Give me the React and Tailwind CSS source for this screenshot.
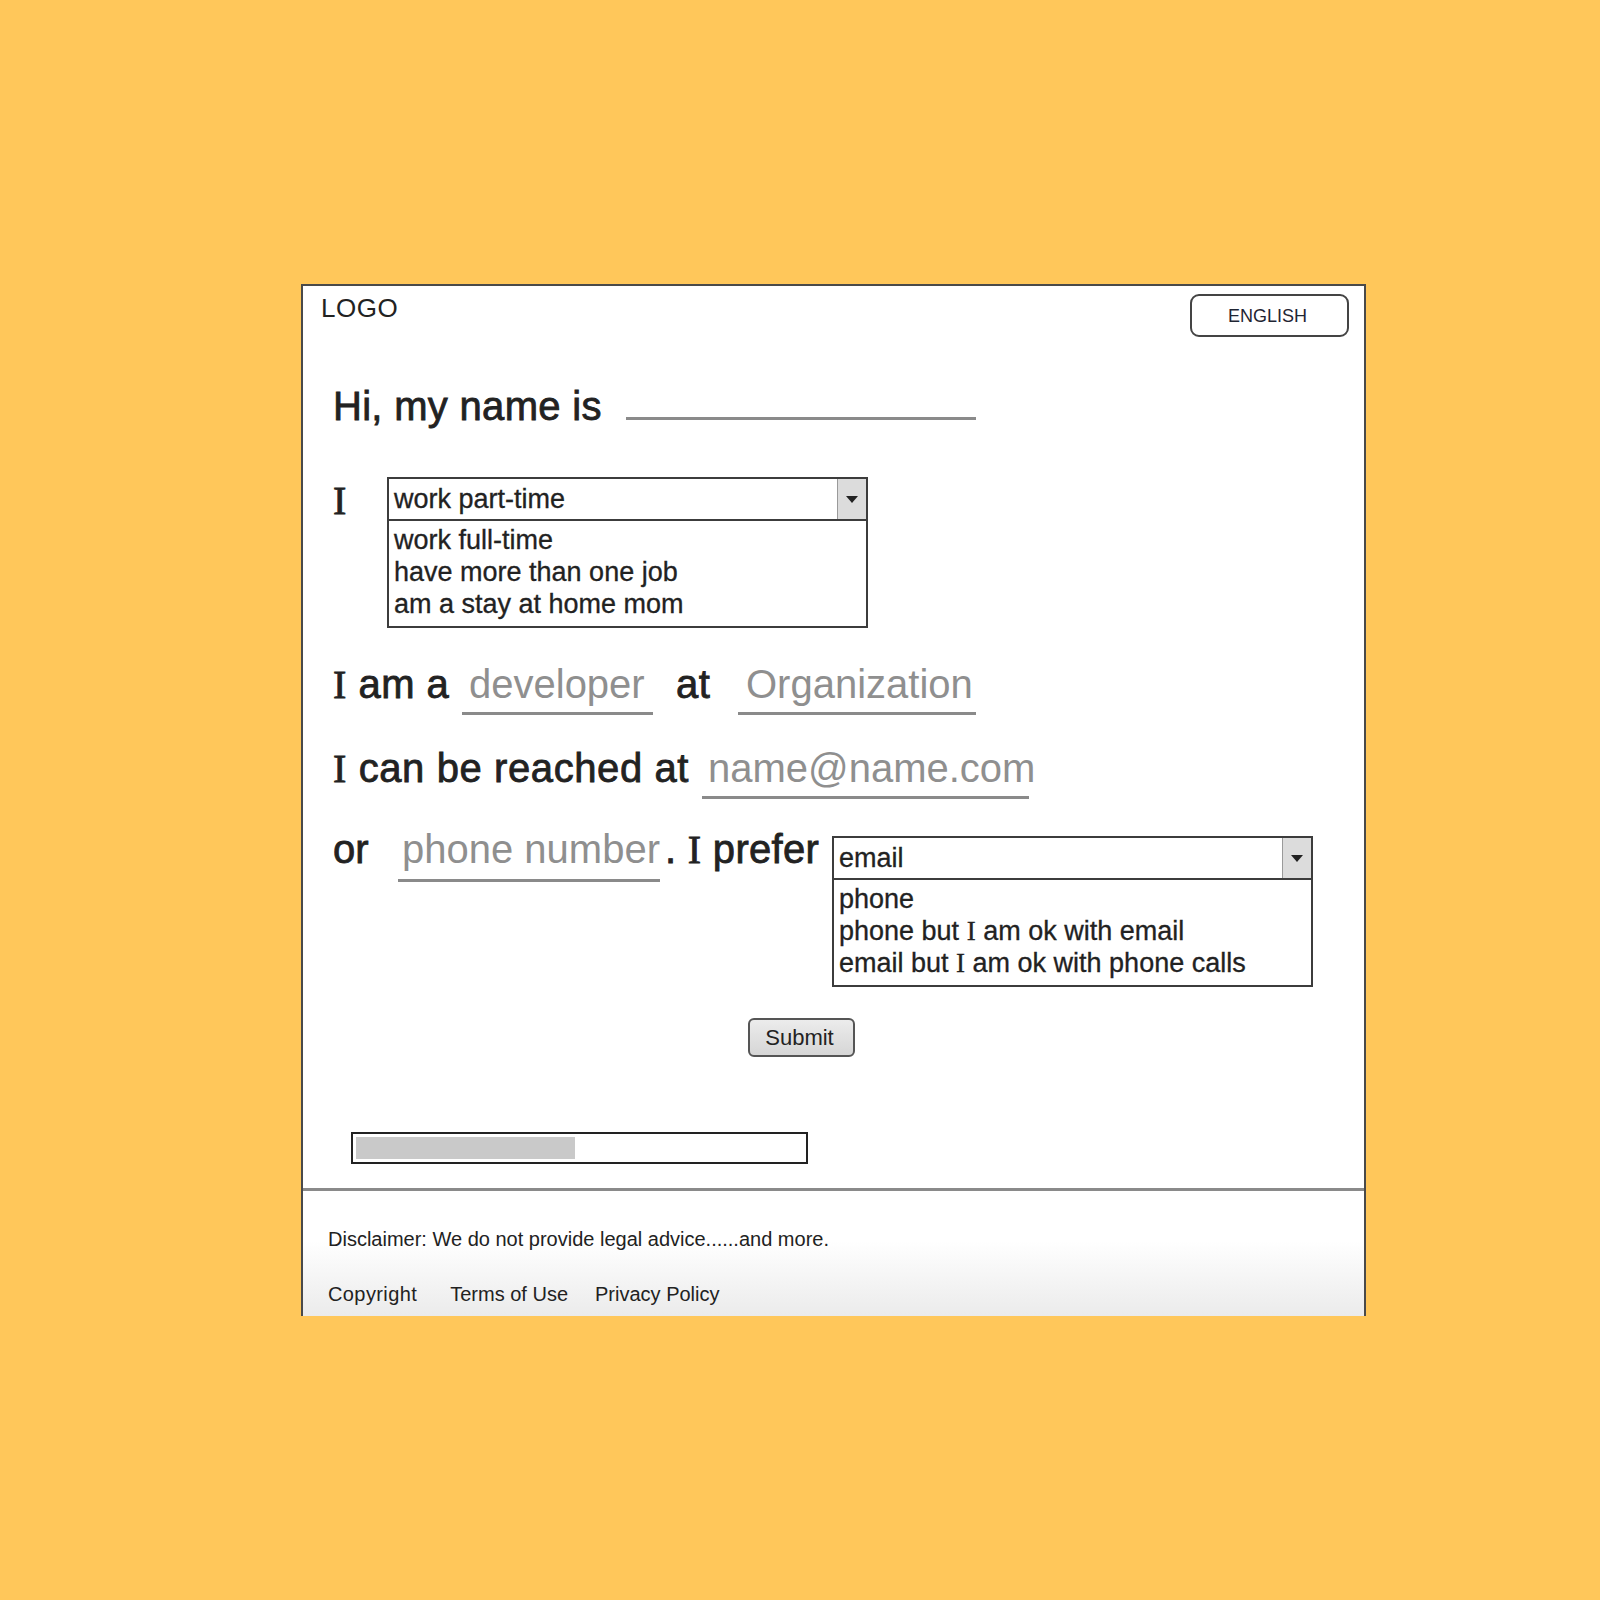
import React from "react";

// serif "I" like the wireframe font
const I = () => <span className="font-['Liberation_Serif',serif]">I</span>;

const Select = ({ value, options }) => (
    <div className="w-[481px] border-2 border-[#3c3c3c] bg-white text-[27px] text-[#222] tracking-normal [-webkit-text-stroke:0.3px_#222]">
        <div className="flex h-[42px] border-b-2 border-[#3c3c3c]">
            <div className="flex-1 pl-[5px] leading-[40px]">{value}</div>
            <div className="w-[29px] flex items-center justify-center bg-[#dcdcdc] border-l border-[#9a9a9a]">
                <svg width="12" height="7" viewBox="0 0 12 7">
                    <path d="M0 0h12L6 7z" fill="#222" />
                </svg>
            </div>
        </div>
        <div className="pt-[3px] pb-[6px] pl-[5px] leading-[32px]">
            {options.map((o, i) => (
                <div key={i}>{o}</div>
            ))}
        </div>
    </div>
);

export default function App() {
    return (
        <div className="min-h-[1600px] w-full bg-[#ffc75a] pt-[284px] pl-[301px] font-['Liberation_Sans',Arial,sans-serif] text-[#222]">
            <div className="w-[1065px] h-[1032px] border-2 border-b-0 border-[#4a4a4a] bg-white flex flex-col">
                {/* header */}
                <div className="flex items-start justify-between pl-[18px] pr-[15px] pt-[8px]">
                    <span className="text-[26px] leading-none mt-[1px] tracking-[0.5px]">LOGO</span>
                    <button className="w-[159px] h-[43px] rounded-[9px] border-2 border-[#444] pr-[4px] text-[18px] leading-none text-[#1f2533]">
                        ENGLISH
                    </button>
                </div>

                {/* form */}
                <div className="flex-1 pl-[30px] text-[40px] leading-none">
                    <div className="flex items-start mt-[49px] tracking-[0.3px] [-webkit-text-stroke:0.8px_#222]">
                        <span>Hi, my name is</span>
                        <div className="ml-[24px] mt-[31px] h-[3px] w-[350px] bg-[#8a8a8a]" />
                    </div>

                    <div className="flex items-start mt-[51px]">
                        <span className="mt-[3px] w-[54px] [-webkit-text-stroke:0.8px_#222]">
                            <I />
                        </span>
                        <Select
                            value="work part-time"
                            options={["work full-time", "have more than one job", "am a stay at home mom"]}
                        />
                    </div>

                    <div className="flex items-start mt-[36px]">
                        <span className="w-[129px] tracking-[0.5px] [-webkit-text-stroke:0.8px_#222]">
                            <I /> am a
                        </span>
                        <div className="w-[191px] h-[51px] border-b-[3px] border-[#8a8a8a] pl-[7px] text-[#8f8f8f]">
                            developer
                        </div>
                        <span className="ml-[23px] w-[62px] tracking-[0.5px] [-webkit-text-stroke:0.8px_#222]">at</span>
                        <div className="w-[238px] h-[51px] border-b-[3px] border-[#8a8a8a] pl-[8px] text-[#8f8f8f]">
                            Organization
                        </div>
                    </div>

                    <div className="flex items-start mt-[33px]">
                        <span className="w-[369px] tracking-[0.6px] [-webkit-text-stroke:0.8px_#222]">
                            <I /> can be reached at
                        </span>
                        <div className="w-[327px] h-[51px] border-b-[3px] border-[#8a8a8a] pl-[6px] text-[#8f8f8f]">
                            name@name.com
                        </div>
                    </div>

                    <div className="flex items-start mt-[30px]">
                        <span className="w-[65px] [-webkit-text-stroke:0.8px_#222]">or</span>
                        <div className="w-[262px] h-[53px] border-b-[3px] border-[#8a8a8a] pl-[4px] text-[#8f8f8f]">
                            phone number
                        </div>
                        <span className="w-[172px] pl-[5px] tracking-[0.3px] [-webkit-text-stroke:0.8px_#222]">
                            . <I /> prefer
                        </span>
                        <div className="mt-[7px]">
                            <Select
                                value="email"
                                options={[
                                    "phone",
                                    <>phone but <I /> am ok with email</>,
                                    <>email but <I /> am ok with phone calls</>,
                                ]}
                            />
                        </div>
                    </div>

                    <button className="block mt-[31px] ml-[415px] w-[107px] h-[39px] rounded-[6px] border-2 border-[#555] bg-linear-to-b from-[#ececec] to-[#d6d6d6] pr-[4px] text-[22px] leading-none text-[#222]">
                        Submit
                    </button>

                    <div className="mt-[75px] ml-[18px] w-[457px] h-[32px] border-2 border-[#222] p-[3px]">
                        <div className="h-full w-[219px] bg-[#c9c9c9]" />
                    </div>
                </div>

                {/* footer */}
                <div className="h-[128px] border-t-[3px] border-[#8a8a8a] bg-linear-to-b from-white from-40% to-[#ebebeb] pl-[25px] pt-[38px] text-[20px] leading-none text-[#222]">
                    <div>Disclaimer: We do not provide legal advice......and more.</div>
                    <div className="flex mt-[35px]">
                        <span className="tracking-[0.4px]">Copyright</span>
                        <span className="ml-[33px]">Terms of Use</span>
                        <span className="ml-[27px]">Privacy Policy</span>
                    </div>
                </div>
            </div>
        </div>
    );
}
